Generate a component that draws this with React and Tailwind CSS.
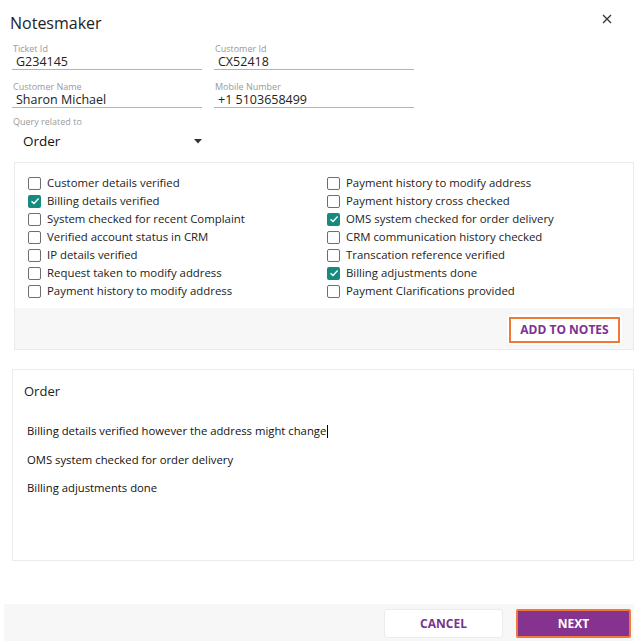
import React from "react";

const left = [
  ["Customer details verified", false],
  ["Billing details verified", true],
  ["System checked for recent Complaint", false],
  ["Verified account status in CRM", false],
  ["IP details verified", false],
  ["Request taken to modify address", false],
  ["Payment history to modify address", false],
];
const right = [
  ["Payment history to modify address", false],
  ["Payment history cross checked", false],
  ["OMS system checked for order delivery", true],
  ["CRM communication history checked", false],
  ["Transcation reference verified", false],
  ["Billing adjustments done", true],
  ["Payment Clarifications provided", false],
];

function Check({ label, checked }) {
  return (
    <div className="flex items-center h-[18px]">
      {checked ? (
        <span className="w-[13px] h-[13px] rounded-[2px] bg-[#168a7f] flex items-center justify-center">
          <svg width="10" height="10" viewBox="0 0 10 10">
            <path d="M1.5 5.2 L4 7.5 L8.6 2.6" fill="none" stroke="white" strokeWidth="1.4" />
          </svg>
        </span>
      ) : (
        <span className="w-[13px] h-[13px] rounded-[2px] border-[1.5px] border-[#6e6e6e] bg-white" />
      )}
      <span className="ml-[6px] text-[11.4px] text-[#222]">{label}</span>
    </div>
  );
}

function Field({ label, value }) {
  return (
    <div className="border-b border-[#b3b3b3] flex flex-col">
      <div className="text-[9px] leading-[11px] h-[11px] text-[#9a9a9a] pl-[1px]">{label}</div>
      <div className="text-[12.5px] leading-[15px] h-[15px] text-[#222] pl-[4px]">{value}</div>
    </div>
  );
}

export default function App() {
  return (
    <div
      className="w-[634px] h-[641px] bg-white flex flex-col overflow-hidden"
      style={{ fontFamily: '"Open Sans", "Noto Sans", sans-serif' }}
    >
      <div className="flex items-start justify-between h-[43px] pl-[10px] pr-[22px] pt-[12px]">
        <div className="text-[16px] leading-[22px] text-[#222]">Notesmaker</div>
        <svg width="10" height="10" viewBox="0 0 10 10" className="mt-[2px]">
          <path d="M1 1 L9 9 M9 1 L1 9" stroke="#333" strokeWidth="1.3" />
        </svg>
      </div>

      <div className="ml-[12px] grid grid-cols-[190px_200px] gap-x-[12px] gap-y-[11px]">
        <Field label="Ticket Id" value="G234145" />
        <Field label="Customer Id" value="CX52418" />
        <Field label="Customer Name" value="Sharon Michael" />
        <Field label="Mobile Number" value="+1 5103658499" />
      </div>

      <div className="ml-[13px] mt-[8px]">
        <div className="text-[9px] leading-[11px] text-[#9a9a9a]">Query related to</div>
        <div className="flex items-center w-[190px] h-[24px] mt-[2px] pl-[10px]">
          <span className="text-[13.5px] text-[#111] flex-1">Order</span>
          <svg width="8" height="5" viewBox="0 0 8 5" className="mr-[1px]">
            <path d="M0 0 L8 0 L4 4.5 Z" fill="#333" />
          </svg>
        </div>
      </div>

      <div className="ml-[14px] mt-[9px] border border-[#ebebeb] h-[188px] flex flex-col">
        <div className="bg-white h-[145px] grid grid-cols-[299px_1fr] pl-[13px] pt-[11px]">
          <div>
            {left.map(([l, c], i) => (
              <Check key={i} label={l} checked={c} />
            ))}
          </div>
          <div>
            {right.map(([l, c], i) => (
              <Check key={i} label={l} checked={c} />
            ))}
          </div>
        </div>
        <div className="flex-1 bg-[#f7f7f7] flex justify-end items-start pt-[6px] pr-[11px]">
          <div className="bg-white rounded-[3px] p-[2px] shadow-[0_0_1px_rgba(0,0,0,0.15)]">
            <button className="h-[26px] w-[111px] border-[2.5px] border-[#f07838] text-[12px] font-bold text-[#7d3190] bg-white">
              ADD TO NOTES
            </button>
          </div>
        </div>
      </div>

      <div className="ml-[12px] mt-[19px] border border-[#ebebeb] h-[192px]">
        <div className="text-[13px] text-[#222] pl-[11px] pt-[12px] leading-[18px]">Order</div>
        <div className="pl-[14px] pt-[22px] text-[11.3px] text-[#111] flex flex-col gap-[10.5px] leading-[18px]">
          <div>
            Billing details verified however the address might change
            <span className="inline-block w-[1px] h-[13px] bg-black align-middle ml-[1px]" />
          </div>
          <div>OMS system checked for order delivery</div>
          <div>Billing adjustments done</div>
        </div>
      </div>

      <div className="ml-[4px] mt-[43px] flex-1 bg-[#f7f7f7] flex justify-end items-start pt-[5px] pr-[3px] gap-[13px]">
        <button className="w-[119px] h-[29px] bg-white rounded-[3px] border border-[#ececec] text-[12px] font-bold text-[#7d3190]">
          CANCEL
        </button>
        <button className="w-[115px] h-[29px] bg-[#85338f] border-[2.5px] border-[#f07838] rounded-[2px] text-[12px] font-bold text-white">
          NEXT
        </button>
      </div>
    </div>
  );
}
